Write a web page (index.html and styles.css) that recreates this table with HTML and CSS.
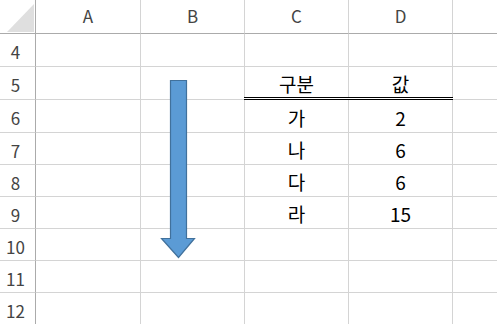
FILE: index.html
```html
<!DOCTYPE html>
<html lang="ko">
<head>
<meta charset="utf-8">
<title>Sheet</title>
<link rel="stylesheet" href="styles.css">
</head>
<body>
<div class="sheet">
  <div class="grid">
    <div class="cell corner"><span class="tri"></span></div>
    <div class="cell colhead">A</div>
    <div class="cell colhead">B</div>
    <div class="cell colhead">C</div>
    <div class="cell colhead">D</div>
    <div class="cell colhead last"></div>

    <div class="cell rowhead">4</div>
    <div class="cell"></div><div class="cell"></div><div class="cell"></div><div class="cell"></div><div class="cell last"></div>

    <div class="cell rowhead">5</div>
    <div class="cell"></div><div class="cell"></div>
    <div class="cell data dbl">구분</div>
    <div class="cell data dbl">값</div>
    <div class="cell last"></div>

    <div class="cell rowhead">6</div>
    <div class="cell"></div><div class="cell"></div>
    <div class="cell data">가</div>
    <div class="cell data">2</div>
    <div class="cell last"></div>

    <div class="cell rowhead">7</div>
    <div class="cell"></div><div class="cell"></div>
    <div class="cell data">나</div>
    <div class="cell data">6</div>
    <div class="cell last"></div>

    <div class="cell rowhead">8</div>
    <div class="cell"></div><div class="cell"></div>
    <div class="cell data">다</div>
    <div class="cell data">6</div>
    <div class="cell last"></div>

    <div class="cell rowhead">9</div>
    <div class="cell"></div><div class="cell"></div>
    <div class="cell data">라</div>
    <div class="cell data">15</div>
    <div class="cell last"></div>

    <div class="cell rowhead">10</div>
    <div class="cell"></div><div class="cell"></div><div class="cell"></div><div class="cell"></div><div class="cell last"></div>

    <div class="cell rowhead">11</div>
    <div class="cell"></div><div class="cell"></div><div class="cell"></div><div class="cell"></div><div class="cell last"></div>

    <div class="cell rowhead">12</div>
    <div class="cell"></div><div class="cell"></div><div class="cell"></div><div class="cell"></div><div class="cell last"></div>
  </div>

  <svg class="arrow" width="40" height="182" viewBox="0 0 40 182">
    <path d="M10.5 0.5 H26.5 V158.5 H34.5 L18.5 177.5 L1.5 158.5 H10.5 Z" fill="#5b9bd5" stroke="#41719c" stroke-width="1.2" stroke-linejoin="miter"/>
  </svg>
</div>
</body>
</html>
```

FILE: styles.css
```css
html, body {
  margin: 0;
  padding: 0;
  background: #ffffff;
}

.sheet {
  position: relative;
  width: 497px;
  height: 324px;
  overflow: hidden;
  font-family: "Noto Sans CJK KR", "Noto Sans", sans-serif;
}

.grid {
  display: grid;
  grid-template-columns: 36px 105px 104px 104px 104px 60px;
  grid-template-rows: 34px 33px 33px 33px 32px 32px 32px 32px 32px 32px 32px;
}

.cell {
  box-sizing: border-box;
  border-right: 1px solid #d4d4d4;
  border-bottom: 1px solid #d4d4d4;
  display: flex;
  align-items: center;
  justify-content: center;
  min-width: 0;
}

.corner {
  position: relative;
  border-right: 1px solid #ababab;
  border-bottom: 1px solid #ababab;
}

.tri {
  position: absolute;
  left: 7px;
  top: 4px;
  width: 27px;
  height: 28px;
  background: #dfdfdf;
  clip-path: polygon(100% 0, 100% 100%, 0 100%);
}

.colhead {
  border-bottom: 1px solid #ababab;
  color: #444444;
  font-size: 17px;
  line-height: 20px;
  padding-bottom: 2px;
}

.rowhead {
  border-right: 1px solid #ababab;
  color: #444444;
  font-size: 17px;
  line-height: 20px;
  padding-top: 4px;
  padding-right: 4px;
}

.data {
  color: #000000;
  font-size: 19px;
  line-height: 22px;
  align-items: flex-end;
  padding-bottom: 3px;
}

.dbl {
  position: relative;
  padding-bottom: 4px;
}

.dbl::after {
  content: "";
  position: absolute;
  left: -1px;
  right: -1px;
  bottom: -1px;
  height: 1px;
  border-top: 1px solid #000000;
  border-bottom: 1px solid #000000;
  background: #ffffff;
}

.last {
  border-right: none;
}

.arrow {
  position: absolute;
  left: 160px;
  top: 80px;
}
```
